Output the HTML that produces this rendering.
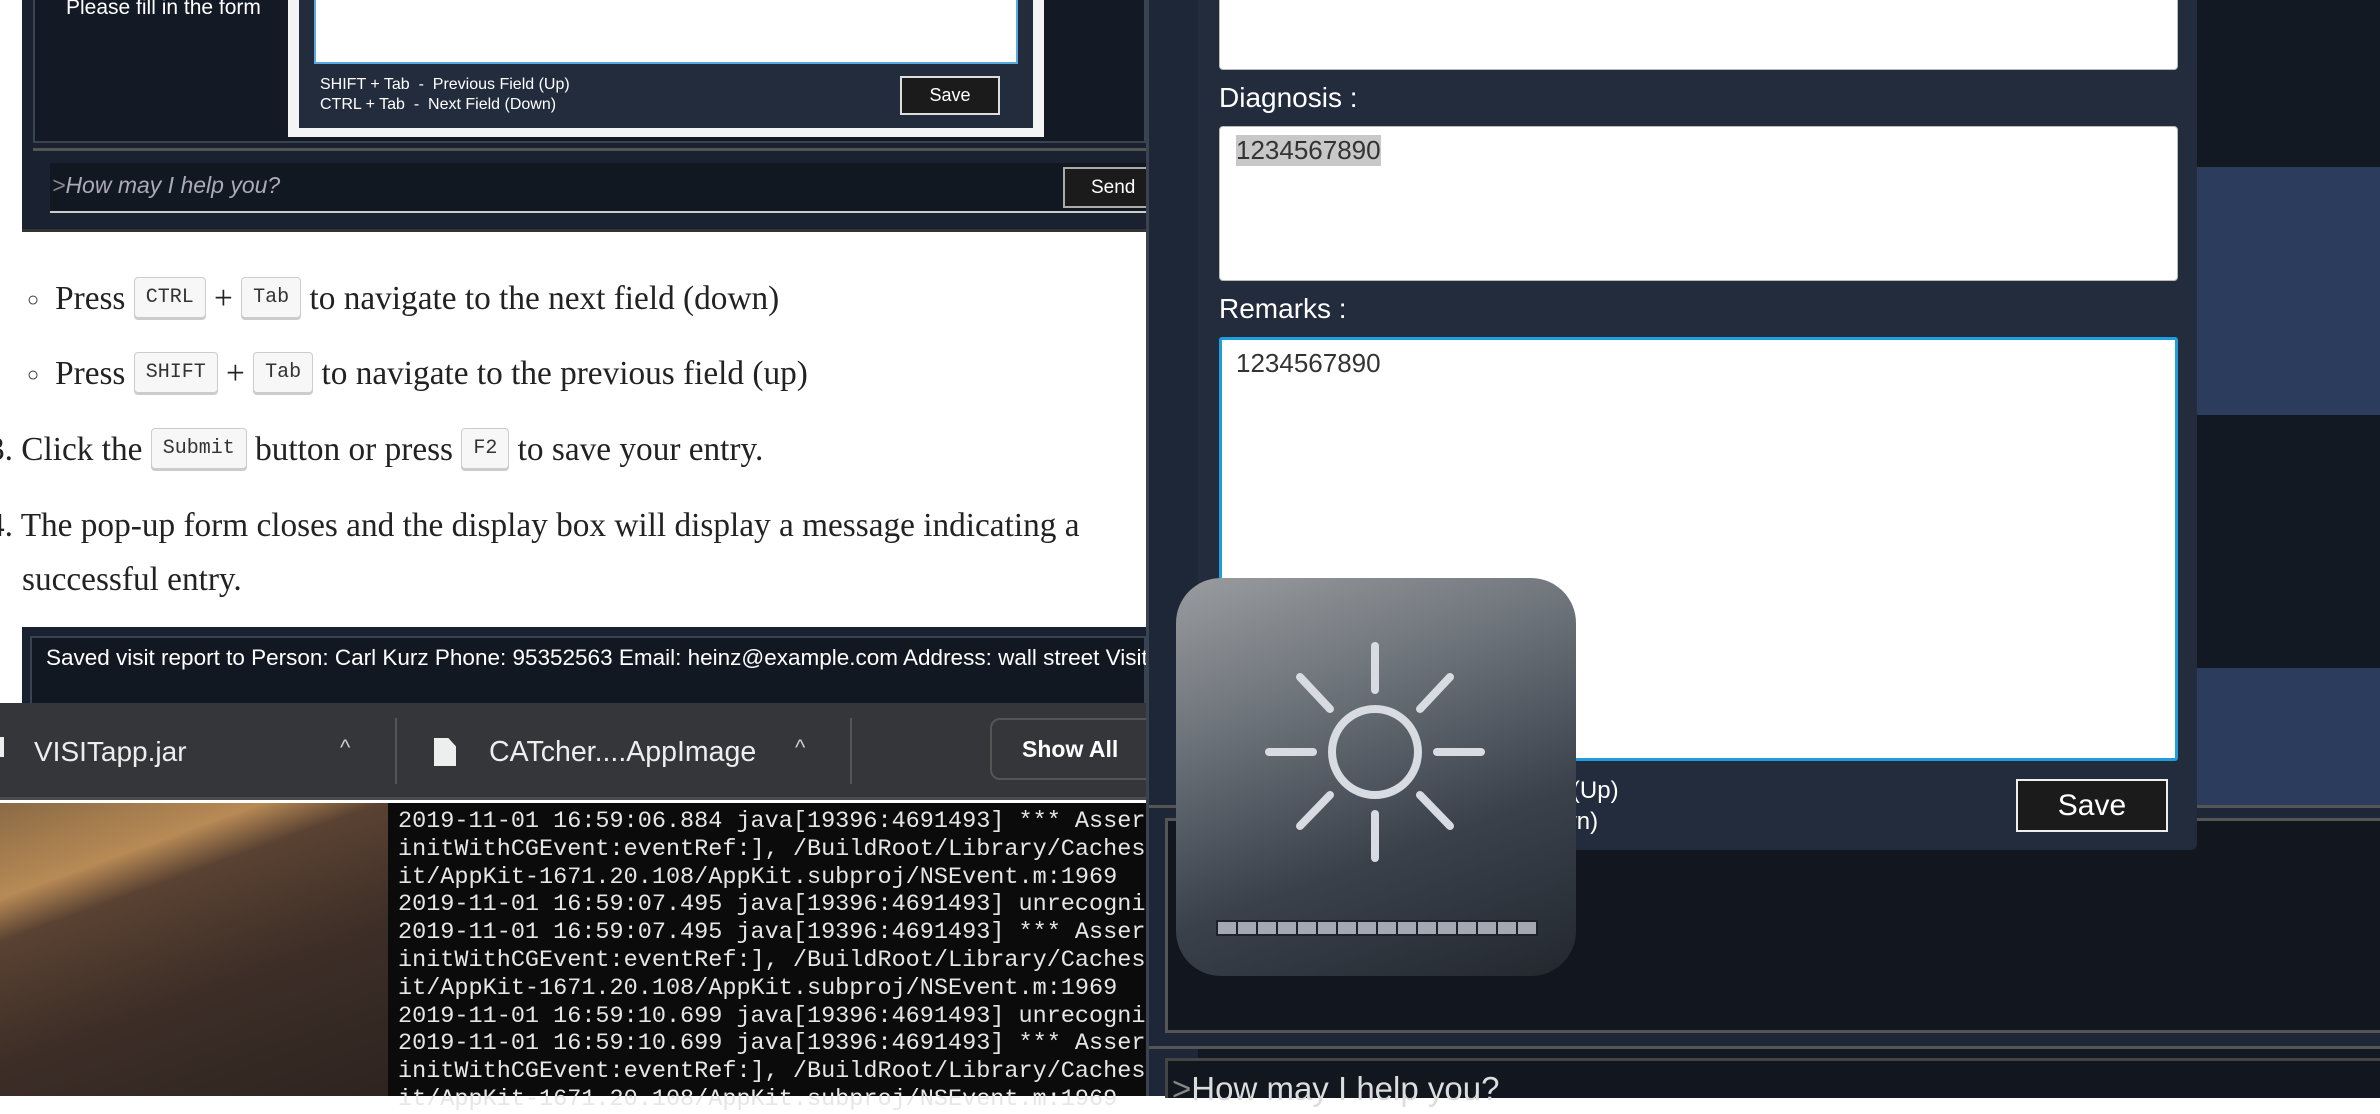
<!DOCTYPE html>
<html><head><meta charset="utf-8"><style>
*{margin:0;padding:0;box-sizing:border-box}
body{width:2380px;height:1096px;overflow:hidden;position:relative;background:#fff;font-family:"Liberation Sans",sans-serif}
.a{position:absolute}
.ser{font-family:"Liberation Serif",serif;font-size:33.3px;color:#222;white-space:nowrap}
.kbd{display:inline-block;font-family:"Liberation Mono",monospace;font-size:20px;border:1px solid #ccc;border-radius:4px;background:#f7f7f7;box-shadow:0 2px 0 #ccc;padding:8px 11px;vertical-align:middle;position:relative;top:-4px;color:#333}
.cond{font-family:"Liberation Sans Narrow","Liberation Sans",sans-serif}
.mono{font-family:"Liberation Mono",monospace;font-size:23.5px;color:#e6e6e6;line-height:27.8px;white-space:pre}
</style></head><body>
<div class="a" style="left:22px;top:0;width:1124px;height:231px;background:#1a2231"></div>
<div class="a" style="left:33px;top:0;width:1113px;height:143px;background:#131a26;border:2px solid #3a4352;border-top:none"></div>
<div class="a cond" style="left:66px;top:-4px;font-size:21px;color:#fff">Please fill in the form</div>
<div class="a" style="left:288px;top:0;width:756px;height:137px;background:#f4f4f4"></div>
<div class="a" style="left:299px;top:0;width:734px;height:128px;background:#222c3d"></div>
<div class="a" style="left:314px;top:0;width:704px;height:64px;background:#fff;border:2px solid #5aa8e0;border-top:none"></div>
<div class="a cond" style="left:320px;top:75px;font-size:16px;color:#fff;line-height:20px">SHIFT + Tab &nbsp;- &nbsp;Previous Field (Up)<br>CTRL + Tab &nbsp;- &nbsp;Next Field (Down)</div>
<div class="a cond" style="left:900px;top:76px;width:100px;height:39px;background:#1b1b1b;border:2px solid #ddd;color:#fff;font-size:18px;text-align:center;line-height:35px">Save</div>
<div class="a" style="left:33px;top:148px;width:1113px;height:3px;background:#555"></div>
<div class="a" style="left:50px;top:163px;width:1096px;height:50px;background:#121822;border-bottom:2px solid #ccc"></div>
<div class="a cond" style="left:52px;top:172px;font-size:23px;color:#aab;font-style:italic"><span style="color:#888">&gt;</span>How may I help you?</div>
<div class="a cond" style="left:1063px;top:167px;width:90px;height:41px;background:#1b1b1b;border:2px solid #aaa;color:#fff;font-size:19px;line-height:37px;padding-left:26px">Send</div>
<div class="a" style="left:22px;top:229px;width:1124px;height:3px;background:#333"></div>
<div class="a ser" style="left:27px;top:280px"><span style="font-size:20px;margin-right:16px;position:relative;top:-3px">○</span>Press <span class="kbd">CTRL</span> + <span class="kbd">Tab</span> to navigate to the next field (down)</div>
<div class="a ser" style="left:27px;top:355px"><span style="font-size:20px;margin-right:16px;position:relative;top:-3px">○</span>Press <span class="kbd">SHIFT</span> + <span class="kbd">Tab</span> to navigate to the previous field (up)</div>
<div class="a ser" style="left:-12px;top:431px">3. Click the <span class="kbd">Submit</span> button or press <span class="kbd">F2</span> to save your entry.</div>
<div class="a ser" style="left:-12px;top:507px">4. The pop-up form closes and the display box will display a message indicating a</div>
<div class="a ser" style="left:22px;top:561px">successful entry.</div>
<div class="a" style="left:22px;top:627px;width:1124px;height:80px;background:#1a2231"></div>
<div class="a" style="left:30px;top:636px;width:1116px;height:70px;background:#121822;border:2px solid #3a4352"></div>
<div class="a cond" style="left:46px;top:645px;font-size:22.5px;color:#fff;white-space:nowrap;width:1100px;overflow:hidden">Saved visit report to Person: Carl Kurz Phone: 95352563 Email: heinz@example.com Address: wall street Visit</div>
<div class="a" style="left:0;top:703px;width:1146px;height:97px;background:#35363a;border-bottom:3px solid #4a4b4f"></div>
<div class="a" style="left:-10px;top:737px;width:14px;height:20px;background:#eee"></div>
<div class="a" style="left:34px;top:736px;font-size:28px;color:#eee">VISITapp.jar</div>
<div class="a" style="left:340px;top:735px;font-size:22px;color:#ccc">^</div>
<div class="a" style="left:395px;top:718px;width:2px;height:66px;background:#555"></div>
<div class="a" style="left:434px;top:738px;width:22px;height:28px;background:#eee;clip-path:polygon(0 0,65% 0,100% 30%,100% 100%,0 100%)"></div>
<div class="a" style="left:489px;top:736px;font-size:28.5px;color:#eee">CATcher....AppImage</div>
<div class="a" style="left:795px;top:735px;font-size:22px;color:#ccc">^</div>
<div class="a" style="left:850px;top:718px;width:2px;height:66px;background:#555"></div>
<div class="a" style="left:990px;top:718px;width:170px;height:62px;border:2px solid #555;border-radius:10px;color:#fff;font-size:23px;font-weight:bold;line-height:58px;padding-left:30px">Show All</div>
<div class="a" style="left:0;top:803px;width:388px;height:293px;background:linear-gradient(160deg,#8a6a45 0%,#b88a55 22%,#5a4232 32%,#3d2e27 60%,#2e2420 100%)"></div>
<div class="a" style="left:388px;top:803px;width:758px;height:293px;background:#0b0b0b"></div>
<div class="a mono" style="left:398px;top:808px;width:748px;overflow:hidden">2019-11-01 16:59:06.884 java[19396:4691493] *** Assert
initWithCGEvent:eventRef:], /BuildRoot/Library/Caches/
it/AppKit-1671.20.108/AppKit.subproj/NSEvent.m:1969
2019-11-01 16:59:07.495 java[19396:4691493] unrecogniz
2019-11-01 16:59:07.495 java[19396:4691493] *** Assert
initWithCGEvent:eventRef:], /BuildRoot/Library/Caches/
it/AppKit-1671.20.108/AppKit.subproj/NSEvent.m:1969
2019-11-01 16:59:10.699 java[19396:4691493] unrecogniz
2019-11-01 16:59:10.699 java[19396:4691493] *** Assert
initWithCGEvent:eventRef:], /BuildRoot/Library/Caches/
it/AppKit-1671.20.108/AppKit.subproj/NSEvent.m:1969</div>
<div class="a" style="left:1146px;top:0;width:1234px;height:1096px;background:#131923"></div>
<div class="a" style="left:1146px;top:0;width:52px;height:1096px;background:#1d2737;border-left:3px solid #3b4350"></div>
<div class="a" style="left:2197px;top:167px;width:183px;height:248px;background:#2b3c5d"></div>
<div class="a" style="left:2197px;top:668px;width:183px;height:137px;background:#2b3c5d"></div>
<div class="a" style="left:1149px;top:805px;width:1231px;height:3px;background:#555"></div>
<div class="a" style="left:1149px;top:808px;width:1231px;height:240px;background:#1d2737"></div>
<div class="a" style="left:1165px;top:818px;width:1215px;height:215px;background:#11161f;border:3px solid #555;border-right:none"></div>
<div class="a" style="left:1149px;top:1046px;width:1231px;height:3px;background:#555"></div>
<div class="a" style="left:1165px;top:1058px;width:1215px;height:40px;background:#11161f;border:3px solid #444;border-right:none;border-bottom:none"></div>
<div class="a" style="left:1172px;top:1070px;font-size:33px;color:#ddd;white-space:nowrap"><span style="color:#888">&gt;</span>How may I help you?</div>
<div class="a" style="left:1198px;top:0;width:999px;height:850px;background:#222c3d;border-radius:0 0 6px 6px"></div>
<div class="a" style="left:1219px;top:0;width:959px;height:70px;background:#fff;border:1px solid #bbb;border-top:none;border-radius:0 0 4px 4px"></div>
<div class="a" style="left:1219px;top:82px;font-size:28px;color:#fff">Diagnosis :</div>
<div class="a" style="left:1219px;top:126px;width:959px;height:155px;background:#fff;border:1px solid #bbb;border-radius:4px"></div>
<div class="a" style="left:1236px;top:135px;font-size:26px;color:#333;background:#c8c8c8">1234567890</div>
<div class="a" style="left:1219px;top:293px;font-size:28px;color:#fff">Remarks :</div>
<div class="a" style="left:1219px;top:337px;width:959px;height:424px;background:#fff;border:3px solid #1e9fdc;border-radius:3px"></div>
<div class="a" style="left:1236px;top:348px;font-size:26px;color:#333">1234567890</div>
<div class="a" style="left:1244px;top:775px;font-size:24px;color:#fff;line-height:31px;white-space:nowrap">SHIFT + Tab &nbsp;- &nbsp;Previous Field (Up)<br>CTRL + Tab &nbsp;- &nbsp;Next Field (Down)</div>
<div class="a" style="left:2016px;top:779px;width:152px;height:53px;background:#1b1b1b;border:2px solid #eee;color:#fff;font-size:30px;text-align:center;line-height:49px">Save</div>
<div class="a" style="left:1176px;top:578px;width:400px;height:398px;border-radius:45px;background:linear-gradient(160deg,#9a9c9f 0%,#6e747b 30%,#3a414b 65%,#23282f 100%);overflow:hidden">
<svg width="400" height="398" style="position:absolute;left:0;top:0">
<g stroke="#d8dbe2" stroke-width="8" stroke-linecap="round" fill="none">
<circle cx="199" cy="174" r="43"/>
<line x1="199" y1="68" x2="199" y2="112"/><line x1="199" y1="236" x2="199" y2="280"/>
<line x1="93" y1="174" x2="137" y2="174"/><line x1="261" y1="174" x2="305" y2="174"/>
<line x1="124" y1="99" x2="154" y2="131"/><line x1="244" y1="217" x2="274" y2="248"/>
<line x1="274" y1="99" x2="244" y2="131"/><line x1="154" y1="217" x2="124" y2="248"/>
</g>
<rect x="40" y="342" width="322" height="16" fill="#1e232b"/>
<g fill="#a3a8b2">
<rect x="42" y="344" width="18" height="12"/><rect x="62" y="344" width="18" height="12"/><rect x="82" y="344" width="18" height="12"/><rect x="102" y="344" width="18" height="12"/><rect x="122" y="344" width="18" height="12"/><rect x="142" y="344" width="18" height="12"/><rect x="162" y="344" width="18" height="12"/><rect x="182" y="344" width="18" height="12"/><rect x="202" y="344" width="18" height="12"/><rect x="222" y="344" width="18" height="12"/><rect x="242" y="344" width="18" height="12"/><rect x="262" y="344" width="18" height="12"/><rect x="282" y="344" width="18" height="12"/><rect x="302" y="344" width="18" height="12"/><rect x="322" y="344" width="18" height="12"/><rect x="342" y="344" width="18" height="12"/>
</g></svg></div>
</body></html>
